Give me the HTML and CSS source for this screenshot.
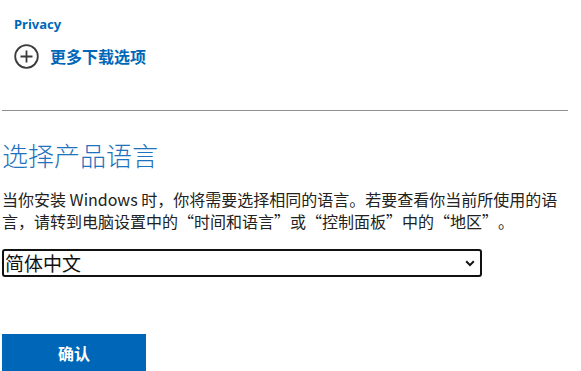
FILE: index.html
```html
<!DOCTYPE html>
<html lang="zh-CN">
<head>
<meta charset="utf-8">
<title>选择产品语言</title>
<link rel="stylesheet" href="styles.css">
</head>
<body>
<main class="page">
  <div class="links">
    <a class="privacy" href="#">Privacy</a>
    <a class="more" href="#">
      <svg class="plus-icon" width="25" height="25" viewBox="0 0 25 25" aria-hidden="true">
        <circle cx="12.5" cy="12.5" r="11.3" fill="none" stroke="#3b3b3b" stroke-width="1.8"/>
        <path d="M12.5 6.5v12M6.5 12.5h12" stroke="#3b3b3b" stroke-width="1.8" fill="none"/>
      </svg>
      <span class="more-text">更多下载选项</span>
    </a>
  </div>
  <div class="divider"></div>
  <h2 class="title">选择产品语言</h2>
  <p class="desc">当你安装 Windows 时，你将需要选择相同的语言。若要查看你当前所使用的语言，请转到电脑设置中的“时间和语言”或“控制面板”中的“地区”。</p>
  <div class="select-wrap">
    <select class="lang-select">
      <option>简体中文</option>
    </select>
    <svg class="chev" width="10" height="7" viewBox="0 0 10 7" aria-hidden="true">
      <path d="M1.2 1.3L5 5.1 8.8 1.3" fill="none" stroke="#111" stroke-width="2"/>
    </svg>
  </div>
  <button class="confirm" type="button">确认</button>
</main>
</body>
</html>
```
FILE: styles.css
```css
* { box-sizing: border-box; }
html, body { margin: 0; padding: 0; background: #fff; }
body {
  font-family: "Noto Sans CJK SC", "Noto Sans", sans-serif;
  color: #222;
  overflow: hidden;
  text-spacing-trim: space-all;
}
.page {
  width: 566px;
  margin-left: 2px;
  display: flex;
  flex-direction: column;
  align-items: flex-start;
}
.links {
  padding: 14px 0 0 12px;
  display: flex;
  flex-direction: column;
  align-items: flex-start;
}
.privacy {
  font-family: "Noto Sans", sans-serif;
  font-weight: 700;
  font-size: 13px;
  line-height: 20px;
  color: #0067b8;
  text-decoration: none;
}
.more {
  margin-top: 10px;
  display: flex;
  align-items: center;
  gap: 11px;
  text-decoration: none;
  color: #0067b8;
}
.plus-icon { display: block; }
.more-text {
  font-size: 16px;
  font-weight: 700;
  line-height: 25px;
}
.divider {
  align-self: stretch;
  margin-top: 41px;
  border-top: 1px solid #8f8f8f;
}
.title {
  margin: 31px 0 0;
  font-size: 26px;
  font-weight: 300;
  line-height: 26px;
  color: #1f72bd;
}
.desc {
  margin: 20px 0 0;
  font-size: 16px;
  line-height: 22px;
  color: #222;
}
.select-wrap {
  position: relative;
  margin-top: 17px;
}
.lang-select {
  appearance: none;
  -webkit-appearance: none;
  display: block;
  width: 480px;
  height: 28px;
  border: 2px solid #111;
  border-radius: 3px;
  background: #fff;
  font-family: "Noto Sans CJK SC", sans-serif;
  font-size: 19px;
  color: #111;
  padding: 0 0 0 1px;
  line-height: 24px;
}
.chev {
  position: absolute;
  right: 7px;
  top: 11px;
}
.confirm {
  margin-top: 57px;
  width: 144px;
  height: 38px;
  border: 0;
  background: #0067b8;
  color: #fff;
  font-family: "Noto Sans CJK SC", sans-serif;
  font-size: 16px;
  font-weight: 700;
  padding: 0;
}
```
